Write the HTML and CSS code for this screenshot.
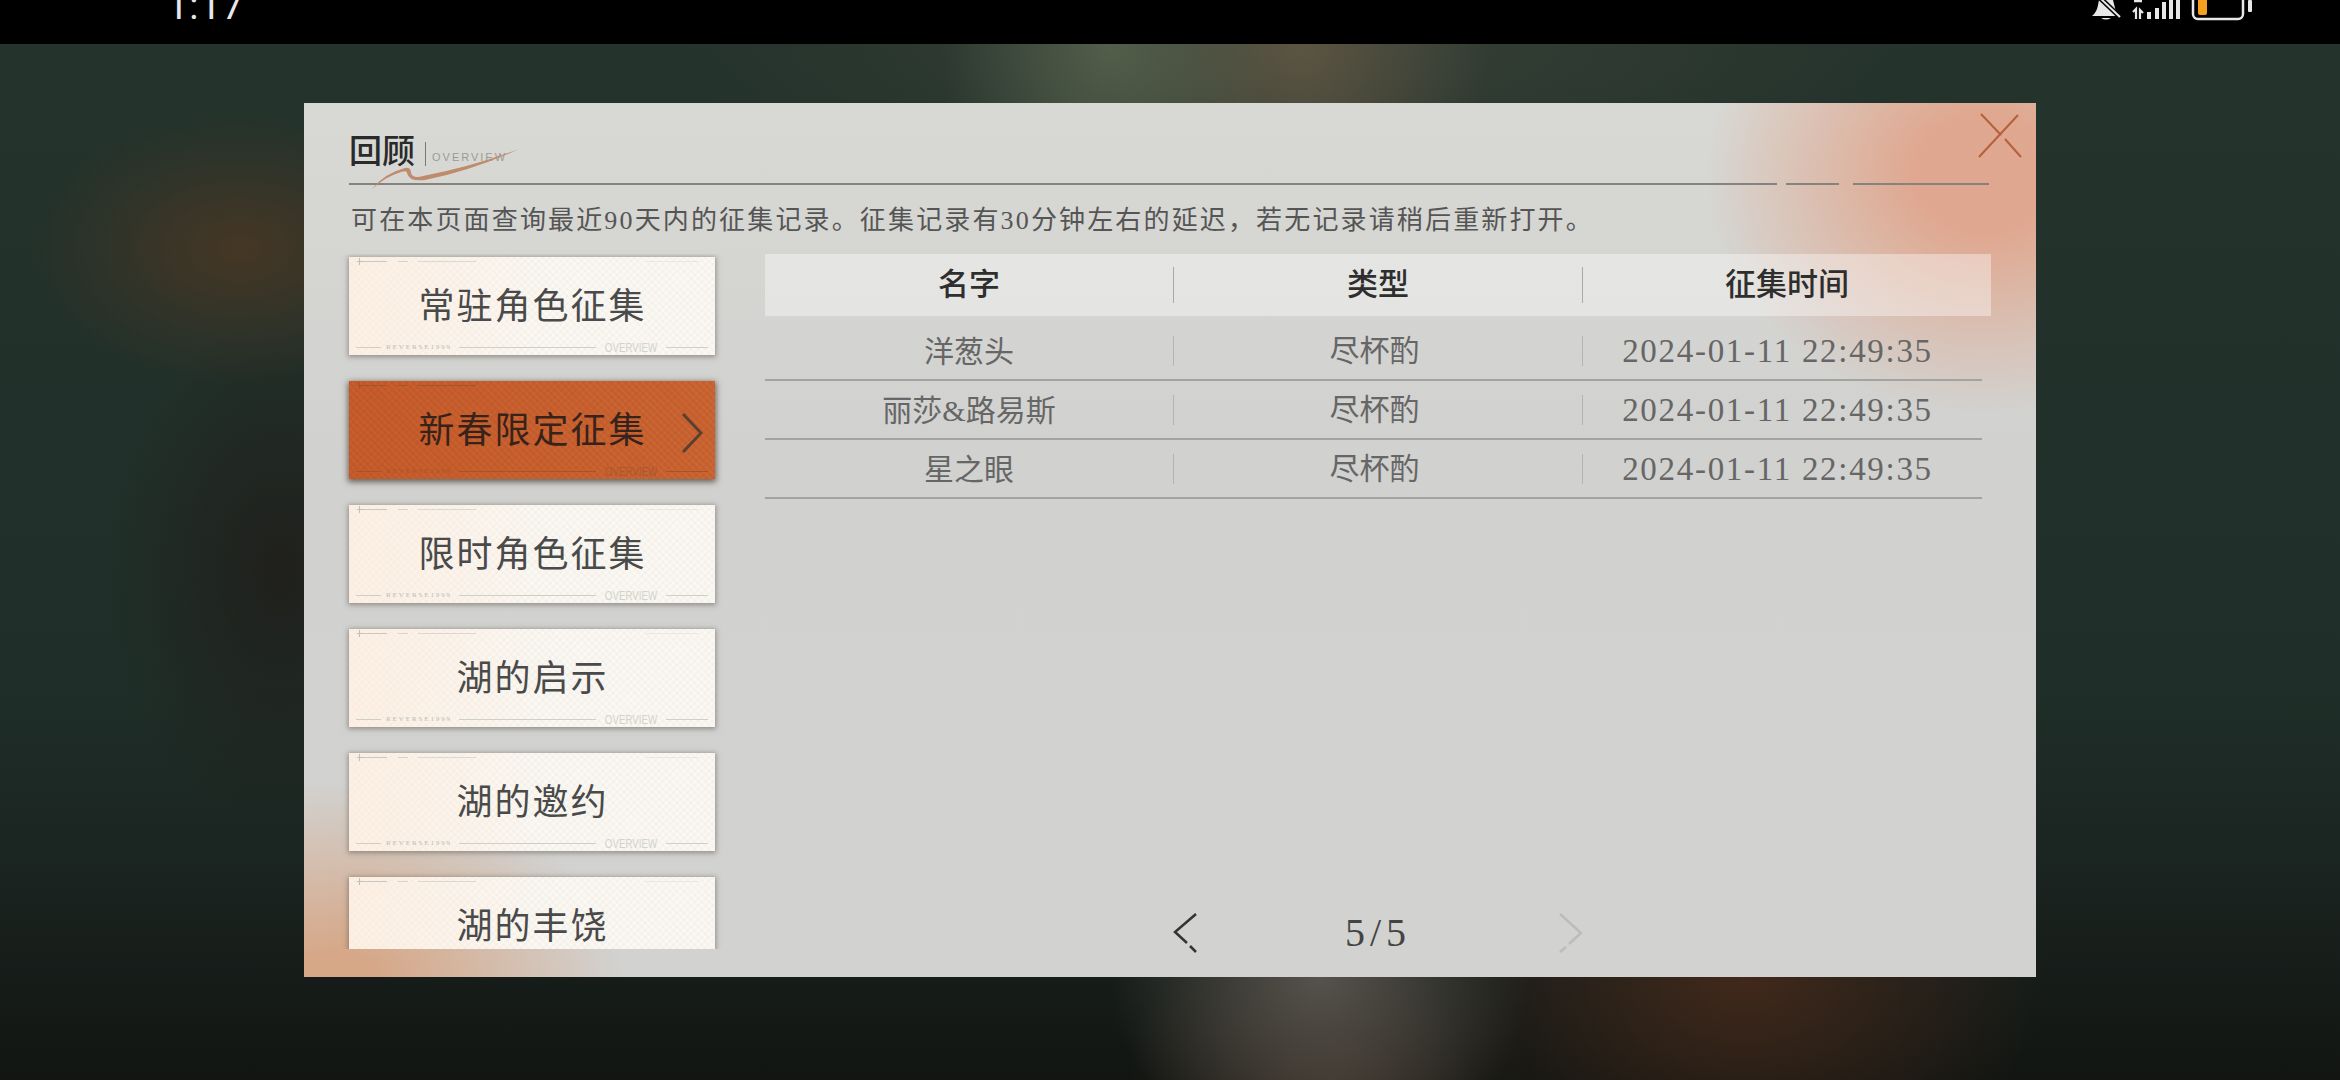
FILE: index.html
```html
<!DOCTYPE html>
<html lang="zh-CN">
<head>
    <meta charset="UTF-8">
    <title>回顾</title>
    <link rel="stylesheet" href="styles.css">
</head>
<body>
    <header class="status-bar">
        <span class="clock">1:17</span>
        <svg class="status-icons" width="170" height="44" viewBox="0 0 170 44" fill="none">
            <!-- muted bell -->
            <path d="M3 16 Q8 12 9 5 L10 0 H24 L27 12 Q28 15 31 16 Z" fill="#e8e8e8"/>
            <path d="M12 18 Q17 21 22 18 Z" fill="#e8e8e8"/>
            <path d="M10 -3 L31 17" stroke="#000" stroke-width="5"/>
            <path d="M10 -3 L31 17" stroke="#e8e8e8" stroke-width="2"/>
            <!-- signal -->
            <path d="M45 1 H53" stroke="#e8e8e8" stroke-width="2.5"/>
            <path d="M44 12 L47 9 V19 M51 19 V10 L54 13" stroke="#e8e8e8" stroke-width="2.2"/>
            <rect x="58" y="12" width="4" height="7" fill="#e8e8e8"/>
            <rect x="66" y="8" width="4" height="11" fill="#e8e8e8"/>
            <rect x="73" y="2" width="4" height="17" fill="#e8e8e8"/>
            <rect x="80" y="0" width="4" height="19" fill="#e8e8e8"/>
            <rect x="87" y="0" width="4" height="19" fill="#e8e8e8"/>
            <!-- battery -->
            <rect x="104" y="-8" width="50" height="27" rx="5" stroke="#e8e8e8" stroke-width="2.5"/>
            <rect x="109" y="-4" width="9" height="19" rx="2" fill="#f5a01e"/>
            <rect x="159" y="0" width="4" height="12" rx="1" fill="#e8e8e8"/>
        </svg>
    </header>

    <main class="stage">
        <section class="panel">
            <svg class="close" width="44" height="46" viewBox="0 0 44 46" fill="none" stroke="#b5603a" stroke-width="2">
                <path d="M1 44 L40 2"/>
                <path d="M3 1 L23 22 M27 26 L43 44"/>
            </svg>

            <div class="panel-title">
                <h1>回顾</h1>
                <span class="overview">OVERVIEW</span>
                <svg class="squiggle" width="150" height="42" viewBox="0 0 150 42" fill="none">
                    <path d="M1 40 Q14 24 34 19 Q40 18 40 24 Q42 30 52 27 Q100 18 148 0 Q100 22 54 31 Q38 33 36 24 Q36 21 30 23 Q14 28 1 40 Z" fill="#c08a6c"/>
                </svg>
            </div>
            <div class="title-rule">
                <span class="rule-a"></span>
                <span class="rule-b"></span>
                <span class="rule-c"></span>
            </div>
            <p class="hint">可在本页面查询最近90天内的征集记录。征集记录有30分钟左右的延迟，若无记录请稍后重新打开。</p>

            <div class="panel-body">
                <nav class="tabs">
                    <a class="tab"><i class="tab-top"></i><span class="tab-name">常驻角色征集</span><span class="tab-foot"><i class="l1"></i><b>REVERSE1999</b><i class="l2"></i><em>OVERVIEW</em><i class="l3"></i></span></a>
                    <a class="tab active"><i class="tab-top"></i><span class="tab-name">新春限定征集</span><span class="tab-foot"><i class="l1"></i><b>REVERSE1999</b><i class="l2"></i><em>OVERVIEW</em><i class="l3"></i></span>
                        <svg class="tab-arrow" width="22" height="40" viewBox="0 0 22 40" fill="none"><path d="M2 1 L20 20 L2 39" stroke="#5b4030" stroke-width="3"/></svg>
                    </a>
                    <a class="tab"><i class="tab-top"></i><span class="tab-name">限时角色征集</span><span class="tab-foot"><i class="l1"></i><b>REVERSE1999</b><i class="l2"></i><em>OVERVIEW</em><i class="l3"></i></span></a>
                    <a class="tab"><i class="tab-top"></i><span class="tab-name">湖的启示</span><span class="tab-foot"><i class="l1"></i><b>REVERSE1999</b><i class="l2"></i><em>OVERVIEW</em><i class="l3"></i></span></a>
                    <a class="tab"><i class="tab-top"></i><span class="tab-name">湖的邀约</span><span class="tab-foot"><i class="l1"></i><b>REVERSE1999</b><i class="l2"></i><em>OVERVIEW</em><i class="l3"></i></span></a>
                    <a class="tab"><i class="tab-top"></i><span class="tab-name">湖的丰饶</span><span class="tab-foot"><i class="l1"></i><b>REVERSE1999</b><i class="l2"></i><em>OVERVIEW</em><i class="l3"></i></span></a>
                </nav>

                <div class="records">
                    <div class="head-row">
                        <div class="head-cell">名字</div>
                        <div class="head-cell">类型</div>
                        <div class="head-cell">征集时间</div>
                    </div>
                    <div class="row">
                        <div class="cell name">洋葱头</div>
                        <div class="cell kind">尽杯酌</div>
                        <div class="cell time">2024-01-11 22:49:35</div>
                    </div>
                    <div class="row">
                        <div class="cell name">丽莎&amp;路易斯</div>
                        <div class="cell kind">尽杯酌</div>
                        <div class="cell time">2024-01-11 22:49:35</div>
                    </div>
                    <div class="row">
                        <div class="cell name">星之眼</div>
                        <div class="cell kind">尽杯酌</div>
                        <div class="cell time">2024-01-11 22:49:35</div>
                    </div>

                    <div class="pager">
                        <svg width="24" height="40" viewBox="0 0 24 40" fill="none" stroke="#333" stroke-width="2.5">
                            <path d="M23 1 L2 19 L14 30 M17 33 L23 39"/>
                        </svg>
                        <span class="page-num">5/5</span>
                        <svg width="24" height="40" viewBox="0 0 24 40" fill="none" stroke="#bcbcba" stroke-width="2.5">
                            <path d="M1 1 L22 20 L10 31 M7 34 L1 39"/>
                        </svg>
                    </div>
                </div>
            </div>
        </section>
    </main>
</body>
</html>
```

FILE: styles.css
```css
* {
    box-sizing: border-box;
}
html, body {
    height: 100%;
}
body {
    margin: 0;
    display: flex;
    flex-direction: column;
    overflow: hidden;
    background: #000;
    font-family: "Liberation Serif", "Noto Sans CJK SC", serif;
    color: #444;
}

/* status bar, its top is cut off in the capture */
.status-bar {
    height: 44px;
    flex: none;
    display: flex;
    justify-content: space-between;
    padding: 0 81px 0 167px;
    overflow: hidden;
    background: #000;
}
.clock {
    margin-top: -16px;
    font-family: Roboto, sans-serif;
    font-size: 38px;
    line-height: 44px;
    letter-spacing: 1px;
    color: #e8e8e8;
}

/* blurred game art behind the panel */
.stage {
    flex: 1;
    padding: 59px 304px 0;
    background:
        radial-gradient(ellipse 170px 220px at 1110px 0, rgba(88, 100, 78, .85), transparent),
        radial-gradient(ellipse 190px 220px at 1300px 0, rgba(98, 88, 68, .85), transparent),
        radial-gradient(ellipse 620px 170px at 1300px 0, rgba(62, 68, 58, .75), transparent),
        radial-gradient(ellipse 210px 135px at 240px 205px, rgba(78, 56, 36, .8), transparent),
        radial-gradient(ellipse 170px 260px at 280px 530px, rgba(32, 28, 25, .8), transparent),
        radial-gradient(ellipse 210px 190px at 1320px 933px, rgba(88, 85, 78, .95), transparent),
        radial-gradient(ellipse 200px 170px at 1330px 1036px, rgba(62, 48, 38, .8), transparent),
        radial-gradient(ellipse 300px 210px at 1745px 933px, rgba(76, 44, 28, .8), transparent),
        linear-gradient(180deg, #24332c 0%, #1f2e28 62%, #1b2521 78%, #121512 100%);
}

.panel {
    position: relative;
    height: 874px;
    padding: 0 46px 0 45px;
    background:
        radial-gradient(ellipse 280px 240px at 1680px 70px, rgba(224, 165, 140, .95) 25%, rgba(224, 165, 140, 0) 100%),
        radial-gradient(ellipse 290px 200px at 30px 880px, rgba(214, 165, 132, .95) 15%, rgba(214, 165, 132, 0) 100%),
        linear-gradient(180deg, #d8d9d5 0%, #d1d1cf 40%, #d2d2d0 100%);
}
.close {
    position: absolute;
    top: 10px;
    right: 14px;
}

.panel-title {
    position: relative;
    height: 80px;
    padding-top: 31px;
    display: flex;
    align-items: flex-start;
}
.panel-title h1 {
    margin: 0;
    font-size: 33px;
    line-height: 36px;
    font-weight: 500;
    color: #2a2a2a;
}
.overview {
    margin: 8px 0 0 10px;
    padding-left: 6px;
    border-left: 1px solid #777;
    height: 24px;
    line-height: 30px;
    font-family: "Liberation Sans", sans-serif;
    font-size: 11px;
    letter-spacing: 2px;
    color: #9a9a97;
}
.squiggle {
    position: absolute;
    left: 22px;
    top: 46px;
}
.title-rule {
    display: flex;
    height: 2px;
    width: 1640px;
}
.title-rule span {
    height: 2px;
    background: #85827f;
}
.rule-a { width: 1428px; }
.rule-b { width: 53px; margin-left: 9px; }
.rule-c { width: 136px; margin-left: 14px; }

.hint {
    margin: 19px 0 0;
    padding-left: 2px;
    height: 33px;
    font-size: 26px;
    line-height: 33px;
    letter-spacing: 2.15px;
    white-space: nowrap;
    color: #555;
}

.panel-body {
    margin-top: 17px;
    height: 722px;
    display: flex;
}
.tabs {
    flex: none;
    width: 382px;
    height: 695px;
    margin-left: -8px;
    padding: 3px 8px 0;
    display: flex;
    flex-direction: column;
    gap: 26px;
    overflow: hidden;
}
.tab {
    position: relative;
    flex: none;
    height: 98px;
    display: flex;
    flex-direction: column;
    background-color: #fbf8f3;
    background-image:
        linear-gradient(90deg, rgba(255, 232, 214, .55), rgba(255, 255, 255, 0) 55%),
        repeating-linear-gradient(45deg, rgba(170, 170, 150, .05) 0 2px, transparent 2px 5px),
        repeating-linear-gradient(-45deg, rgba(170, 170, 150, .05) 0 2px, transparent 2px 5px);
    box-shadow: 0 1px 5px 1px rgba(90, 85, 80, .55);
    color: #4a4a4a;
}
/* faint marks along the top of the card */
.tab-top {
    position: relative;
    flex: none;
    height: 1px;
    margin: 4px 0 0 10px;
    width: 340px;
    background: linear-gradient(90deg,
        #c9c8c2 0 28px, transparent 28px 39px,
        #d4d3cd 39px 49px, transparent 49px 59px,
        #d9d8d2 59px 117px, transparent 117px 287px,
        #e8e7e1 287px 340px);
}
.tab-top::before {
    content: "";
    position: absolute;
    left: -2px;
    top: -3px;
    width: 5px;
    height: 7px;
    background:
        linear-gradient(#c0bfb9, #c0bfb9) center / 1px 100% no-repeat,
        linear-gradient(#c0bfb9, #c0bfb9) center / 100% 1px no-repeat;
}
.tab-name {
    flex: 1;
    padding: 15px 0 0 1px;
    text-align: center;
    font-size: 36px;
    line-height: 60px;
    letter-spacing: 2px;
}
.tab-foot {
    flex: none;
    height: 14px;
    margin-bottom: 1px;
    display: flex;
    align-items: center;
    padding: 0 7px;
    font-style: normal;
}
.tab-foot i {
    height: 1px;
    background: #cfcfc9;
}
.tab-foot .l1 { width: 25px; }
.tab-foot .l2 { width: 137px; }
.tab-foot .l3 { width: 42px; }
.tab-foot b {
    width: 78px;
    padding-left: 5px;
    font-family: "Liberation Serif", serif;
    font-weight: normal;
    font-size: 7px;
    letter-spacing: 1.9px;
    color: #bbb;
}
/* narrow lettering, no condensed face installed */
.tab-foot em {
    width: 58px;
    margin: 0 6px;
    display: flex;
    justify-content: center;
    white-space: nowrap;
    transform: scaleX(.75);
    font-family: "Liberation Sans", sans-serif;
    font-style: normal;
    font-size: 13px;
    color: #d2d2cc;
}
.tab.active {
    background-color: #c75f2d;
    background-image:
        linear-gradient(90deg, rgba(190, 75, 30, .3), rgba(210, 110, 60, .12)),
        repeating-linear-gradient(45deg, rgba(255, 220, 180, .06) 0 2px, transparent 2px 5px),
        repeating-linear-gradient(-45deg, rgba(120, 50, 20, .07) 0 2px, transparent 2px 5px);
    box-shadow: 0 2px 6px 1px rgba(60, 45, 35, .7);
    color: #38231a;
}
.tab.active i { background: #a5542a; }
.tab.active .tab-top { background: linear-gradient(90deg, #a5542a 0 28px, transparent 28px 39px, #a5542a 39px 49px, transparent 49px 59px, #a5542a 59px 117px, transparent 117px); }
.tab.active .tab-top::before { background: linear-gradient(#a5542a, #a5542a) center / 1px 100% no-repeat, linear-gradient(#a5542a, #a5542a) center / 100% 1px no-repeat; }
.tab.active b { color: #a5542a; }
.tab.active em { color: #a8582e; }
.tab-arrow {
    position: absolute;
    right: 12px;
    top: 32px;
}

.records {
    flex: none;
    width: 1226px;
    margin-left: 42px;
    display: flex;
    flex-direction: column;
}
.head-row {
    height: 62px;
    display: grid;
    grid-template-columns: 408px 409px 1fr;
    align-items: center;
    background: rgba(255, 255, 255, .38);
    margin-bottom: 6px;
}
.head-cell {
    height: 36px;
    line-height: 36px;
    text-align: center;
    font-size: 31px;
    font-weight: 500;
    color: #2e2e2e;
}
.head-cell + .head-cell {
    border-left: 1px solid #aaa9a6;
}
.row {
    width: 1217px;
    height: 59px;
    display: grid;
    grid-template-columns: 408px 409px 1fr;
    align-items: center;
    border-bottom: 2px solid #a3a3a0;
}
.row:last-of-type {
    border-bottom-width: 1px;
}
.cell {
    height: 30px;
    line-height: 30px;
    text-align: center;
    font-size: 30px;
    color: #666;
}
.cell + .cell {
    border-left: 1px solid #b4b4b1;
}
.name {
    padding-top: 1px;
}
.kind {
    padding-right: 7px;
}
.time {
    padding-right: 10px;
    font-size: 33px;
    letter-spacing: 1.7px;
    white-space: nowrap;
}

.pager {
    margin-top: auto;
    margin-bottom: 23px;
    display: flex;
    justify-content: center;
    align-items: center;
    gap: 148px;
}
.page-num {
    font-size: 40px;
    line-height: 40px;
    letter-spacing: 5px;
    color: #444;
}
```
